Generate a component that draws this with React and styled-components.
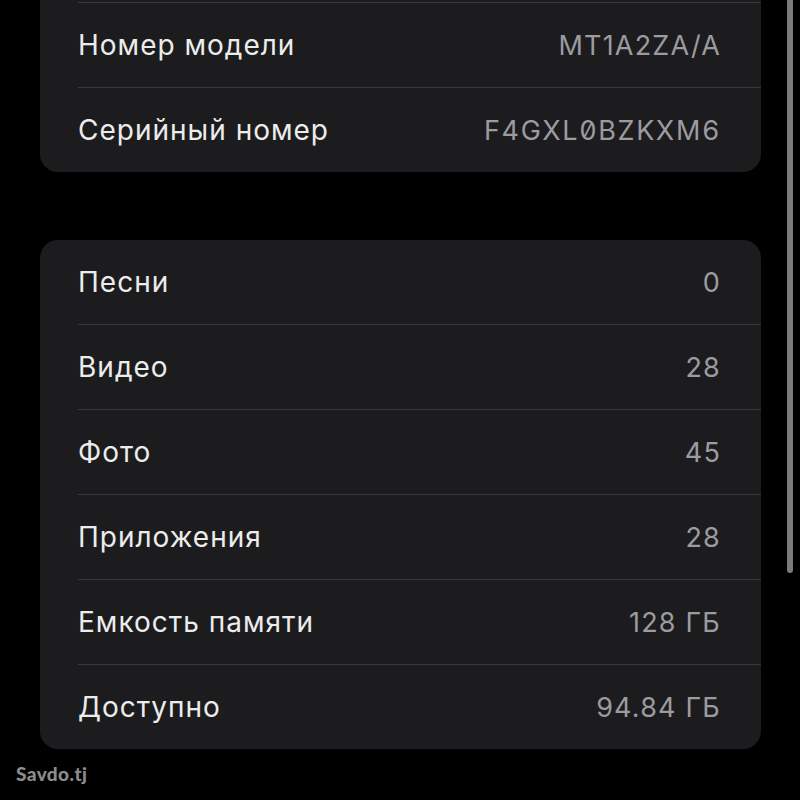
import React from "react";
import styled, { createGlobalStyle } from "styled-components";

const Global = createGlobalStyle`
  html, body { margin: 0; padding: 0; background: #000; }
  body { width: 800px; height: 800px; overflow: hidden; }
  #root { height: 800px; }
`;

const Page = styled.div`
  position: relative;
  width: 800px;
  height: 800px;
  background: #000;
  overflow: hidden;
  font-family: Inter, "Noto Sans", sans-serif;
`;

const List = styled.div`
  display: flex;
  flex-direction: column;
  gap: 68px;
  padding: 0 39px 0 40px;
`;

const Card = styled.div`
  background: #1c1c1e;
  border-radius: 18px;
  overflow: hidden;
  margin-top: ${(p) => p.$offset || 0}px;
`;

const Row = styled.div`
  display: flex;
  align-items: center;
  justify-content: space-between;
  height: 84px;
  padding: 0 40px 0 0;
  margin-left: 38px;
  border-top: ${(p) => (p.$first ? "none" : "1px solid #38383b")};
`;

const Label = styled.span`
  color: #ececec;
  font-size: 28px;
  letter-spacing: 1px;
`;

const Value = styled.span`
  color: #9b9ba0;
  font-size: 27px;
  letter-spacing: ${(p) => (p.$mono ? "1.6px" : "1.2px")};
  font-feature-settings: ${(p) => (p.$mono ? '"zero" 1, "tnum" 1' : '"tnum" 0')};
`;

const Scrollbar = styled.div`
  position: absolute;
  top: -4px;
  left: 787px;
  width: 6px;
  height: 577px;
  border-radius: 3px;
  background: #7b7b7d;
`;

const Watermark = styled.div`
  position: absolute;
  left: 16px;
  top: 762px;
  color: #8c8c8c;
  font-family: Lato, "DejaVu Sans", sans-serif;
  font-weight: 900;
  font-size: 19px;
  letter-spacing: 0.4px;
`;

const top = [
  ["", ""],
  ["Номер модели", "MT1A2ZA/A"],
  ["Серийный номер", "F4GXL0BZKXM6", true],
];

const bottom = [
  ["Песни", "0"],
  ["Видео", "28"],
  ["Фото", "45"],
  ["Приложения", "28"],
  ["Емкость памяти", "128 ГБ"],
  ["Доступно", "94.84 ГБ"],
];

function Section({ rows, offset }) {
  return (
    <Card $offset={offset}>
      {rows.map(([l, v, mono], i) => (
        <Row key={i} $first={i === 0}>
          <Label>{l}</Label>
          <Value $mono={mono}>{v}</Value>
        </Row>
      ))}
    </Card>
  );
}

export default function App() {
  return (
    <Page>
      <Global />
      <List>
        <Section rows={top} offset={-82} />
        <Section rows={bottom} />
      </List>
      <Scrollbar />
      <Watermark>Savdo.tj</Watermark>
    </Page>
  );
}
